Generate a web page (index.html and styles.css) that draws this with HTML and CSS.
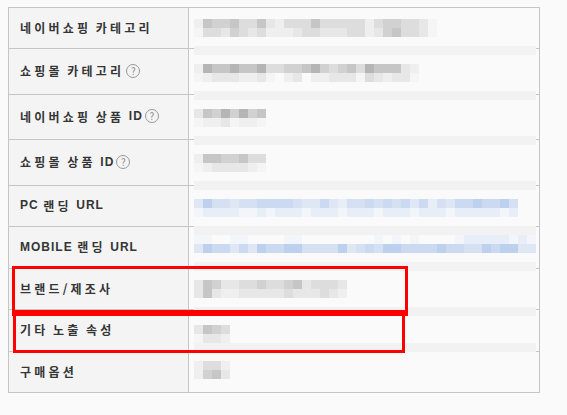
FILE: index.html
```html
<!DOCTYPE html>
<html lang="ko">
<head>
  <meta charset="UTF-8">
  <title>상품 정보</title>
  <link rel="stylesheet" href="styles.css">
</head>
<body>
  <div class="sheet">
    <div class="info-table">
      <div class="row">
        <div class="label">네이버쇼핑 카테고리</div>
        <div class="value"></div>
      </div>
      <div class="row row-q">
        <div class="label">쇼핑몰 카테고리<span class="help">?</span></div>
        <div class="value"></div>
      </div>
      <div class="row row-q row-short">
        <div class="label">네이버쇼핑 상품 <span class="en">ID</span><span class="help">?</span></div>
        <div class="value"></div>
      </div>
      <div class="row row-q">
        <div class="label">쇼핑몰 상품 <span class="en">ID</span><span class="help">?</span></div>
        <div class="value"></div>
      </div>
      <div class="row">
        <div class="label"><span class="en">PC</span> 랜딩 <span class="en">URL</span></div>
        <div class="value"></div>
      </div>
      <div class="row row-odd">
        <div class="label"><span class="en">MOBILE</span> 랜딩 <span class="en">URL</span></div>
        <div class="value"></div>
      </div>
      <div class="row">
        <div class="label">브랜드/제조사</div>
        <div class="value"></div>
      </div>
      <div class="row row-odd">
        <div class="label">기타 노출 속성</div>
        <div class="value"></div>
      </div>
      <div class="row">
        <div class="label">구매옵션</div>
        <div class="value"></div>
      </div>
    </div>

    <!-- values are pixelated in the capture -->
    <div class="mosaic">
      <div class="mz"><i class="l1"></i><i class="l5"></i><i class="l4"></i><i class="l4"></i><i class="l5"></i><i class="l3"></i><i class="l3"></i><i class="l5"></i><i class="l2"></i><i class="l1"></i><i class="l3"></i><i class="l3"></i><i class="l3"></i><i class="l5"></i><i class="l3"></i><i class="l3"></i><i class="l3"></i><i class="l3"></i><i class="l3"></i><i class="l1"></i><i class="l3"></i><i class="l4"></i><i class="l4"></i><i class="l3"></i><i class="l3"></i><i class="l2"></i><i class="l0"></i></div>
      <div class="mz"><i class="l0"></i><i class="l3"></i><i class="l3"></i><i class="l2"></i><i class="l4"></i><i class="l3"></i><i class="l2"></i><i class="l3"></i><i class="l1"></i><i class="l1"></i><i class="l1"></i><i class="l2"></i><i class="l3"></i><i class="l3"></i><i class="l2"></i><i class="l2"></i><i class="l2"></i><i class="l3"></i><i class="l3"></i><i class="l1"></i><i class="l2"></i><i class="l4"></i><i class="l5"></i><i class="l3"></i><i class="l3"></i><i class="l2"></i><i class="l0"></i></div>
      <div class="mz"></div>
      <div class="mz band"></div>
      <div class="mz"></div>
      <div class="mz"><i class="l1"></i><i class="l6"></i><i class="l5"></i><i class="l5"></i><i class="l6"></i><i class="l5"></i><i class="l5"></i><i class="l6"></i><i class="l3"></i><i class="l3"></i><i class="l4"></i><i class="l4"></i><i class="l5"></i><i class="l6"></i><i class="l4"></i><i class="l3"></i><i class="l4"></i><i class="l5"></i><i class="l3"></i><i class="l6"></i><i class="l5"></i><i class="l5"></i><i class="l5"></i><i class="l2"></i><i class="l1"></i></div>
      <div class="mz"><i class="l0"></i><i class="l1"></i><i class="l2"></i><i class="l2"></i><i class="l2"></i><i class="l1"></i><i class="l1"></i><i class="l2"></i><i class="l0"></i><i></i><i class="l1"></i><i class="l2"></i><i></i><i class="l1"></i><i class="l1"></i><i class="l2"></i><i class="l2"></i><i class="l2"></i><i class="l0"></i><i class="l3"></i><i class="l2"></i><i class="l1"></i><i class="l2"></i><i class="l2"></i><i class="l0"></i></div>
      <div class="mz"></div>
      <div class="mz band"></div>
      <div class="mz"></div>
      <div class="mz"><i class="l2"></i><i class="l5"></i><i class="l4"></i><i class="l6"></i><i class="l4"></i><i class="l6"></i><i class="l4"></i><i class="l5"></i></div>
      <div class="mz"><i class="l0"></i><i class="l1"></i><i class="l1"></i><i class="l2"></i><i class="l0"></i><i class="l1"></i><i class="l1"></i><i class="l0"></i></div>
      <div class="mz"></div>
      <div class="mz band"></div>
      <div class="mz"></div>
      <div class="mz"><i class="l1"></i><i class="l5"></i><i class="l5"></i><i class="l4"></i><i class="l4"></i><i class="l5"></i><i class="l3"></i><i class="l3"></i></div>
      <div class="mz"><i class="l0"></i><i class="l1"></i><i class="l2"></i><i class="l2"></i><i class="l2"></i><i class="l2"></i><i class="l1"></i><i class="l0"></i></div>
      <div class="mz"></div>
      <div class="mz band"></div>
      <div class="mz"></div>
      <div class="mz"><i class="b2"></i><i class="b5"></i><i class="b3"></i><i class="b3"></i><i class="b2"></i><i class="b3"></i><i class="b3"></i><i class="b4"></i><i class="b4"></i><i class="b4"></i><i class="b4"></i><i class="b3"></i><i class="b2"></i><i class="b2"></i><i class="b4"></i><i class="b2"></i><i class="b1"></i><i class="b3"></i><i class="b3"></i><i class="b4"></i><i class="b3"></i><i class="b4"></i><i class="b3"></i><i class="b4"></i><i class="b2"></i><i class="b4"></i><i class="b1"></i><i class="b3"></i><i class="b2"></i><i class="b4"></i><i class="b4"></i><i class="b5"></i><i class="b4"></i><i class="b4"></i><i class="b5"></i><i class="b3"></i></div>
      <div class="mz"><i class="b0"></i><i class="b1"></i><i class="b1"></i><i class="b1"></i><i class="b1"></i><i class="b0"></i><i class="b0"></i><i class="b1"></i><i class="b0"></i><i class="b1"></i><i class="b1"></i><i class="b1"></i><i class="b0"></i><i class="b1"></i><i class="b1"></i><i class="b1"></i><i class="b0"></i><i class="b1"></i><i class="b1"></i><i class="b1"></i><i class="b0"></i><i class="b1"></i><i class="b1"></i><i class="b1"></i><i class="b0"></i><i class="b1"></i><i class="b1"></i><i class="b1"></i><i class="b0"></i><i class="b1"></i><i class="b1"></i><i class="b1"></i><i class="b1"></i><i class="b1"></i><i class="b0"></i><i class="b1"></i></div>
      <div class="mz"></div>
      <div class="mz band"></div>
      <div class="mz"><i class="b0"></i><i class="b0"></i><i></i><i></i><i class="b0"></i><i class="b0"></i><i></i><i></i><i></i><i></i><i class="b0"></i><i class="b0"></i><i></i><i></i><i></i><i></i><i></i><i></i><i></i><i></i><i class="b0"></i><i></i><i class="b0"></i><i></i><i class="b0"></i><i></i><i></i><i></i><i></i><i class="b0"></i><i class="b1"></i><i class="b1"></i><i class="b1"></i><i class="b1"></i><i class="b1"></i><i class="b0"></i><i class="b1"></i><i class="b0"></i></div>
      <div class="mz"><i class="b2"></i><i class="b5"></i><i class="b4"></i><i class="b4"></i><i class="b2"></i><i class="b4"></i><i class="b2"></i><i class="b5"></i><i class="b4"></i><i class="b4"></i><i class="b5"></i><i class="b5"></i><i class="b3"></i><i class="b3"></i><i class="b3"></i><i class="b3"></i><i class="b5"></i><i class="b2"></i><i class="b3"></i><i class="b4"></i><i class="b3"></i><i class="b5"></i><i class="b5"></i><i class="b4"></i><i class="b4"></i><i class="b4"></i><i class="b4"></i><i class="b5"></i><i class="b4"></i><i class="b4"></i><i class="b3"></i><i class="b3"></i><i class="b5"></i><i class="b4"></i><i class="b5"></i><i class="b5"></i><i class="b2"></i><i class="b2"></i></div>
      <div class="mz"></div>
      <div class="mz band"></div>
      <div class="mz"></div>
      <div class="mz"><i class="l2"></i><i class="l5"></i><i class="l4"></i><i class="l2"></i><i class="l2"></i><i class="l3"></i><i class="l3"></i><i class="l4"></i><i class="l3"></i><i class="l3"></i><i class="l4"></i><i class="l5"></i><i class="l2"></i><i class="l3"></i><i class="l3"></i><i class="l3"></i><i class="l2"></i></div>
      <div class="mz"><i class="l2"></i><i class="l5"></i><i class="l2"></i><i class="l1"></i><i class="l1"></i><i class="l2"></i><i class="l2"></i><i class="l2"></i><i class="l2"></i><i class="l2"></i><i class="l3"></i><i class="l2"></i><i class="l2"></i><i class="l2"></i><i class="l3"></i><i class="l2"></i><i class="l1"></i></div>
      <div class="mz"></div>
      <div class="mz band"></div>
      <div class="mz"></div>
      <div class="mz"><i class="l2"></i><i class="l5"></i><i class="l4"></i><i class="l3"></i></div>
      <div class="mz"><i class="l0"></i><i class="l2"></i><i class="l2"></i><i class="l1"></i></div>
      <div class="mz band"></div>
      <div class="mz"></div>
      <div class="mz"><i class="l1"></i><i class="l3"></i><i class="l3"></i><i class="l1"></i></div>
      <div class="mz"><i class="l1"></i><i class="l4"></i><i class="l5"></i><i class="l2"></i></div>
    </div>

    <!-- annotation boxes -->
    <div class="mark mark-brand"></div>
    <div class="mark mark-extra"></div>
  </div>
</body>
</html>
```

FILE: styles.css
```css
html {
  background: #fafafa;
}

body {
  margin: 7px 8px;
  font-family: "Noto Sans CJK KR", "Noto Sans", sans-serif;
  font-size: 12px;
  color: #353535;
}

.sheet {
  position: relative;
  width: 532px;
}

.info-table {
  border: 1px solid #c5c5c5;
  background: #fafafa;
}

.row {
  display: flex;
  height: 40px;
}

.row + .row {
  border-top: 1px solid #c5c5c5;
}

.row-odd {
  height: 41px;
}

.row-q {
  height: 45px;
}

.row-q.row-short {
  height: 44px;
}

.label {
  width: 168px;
  padding-left: 11px;
  padding-bottom: 2px;
  display: flex;
  align-items: center;
  white-space: pre;
  background: #f4f4f4;
  border-right: 1px solid #c5c5c5;
  font-weight: bold;
  letter-spacing: 3.2px;
  word-spacing: -2px;
}

.label .en {
  font-family: "Liberation Sans", Arial, sans-serif;
  letter-spacing: 1px;
}

.value {
  flex: 1;
}

.help {
  display: inline-flex;
  justify-content: center;
  align-items: center;
  width: 12px;
  height: 12px;
  margin-left: 2px;
  border: 1px solid #999;
  border-radius: 50%;
  font-size: 10px;
  font-weight: normal;
  letter-spacing: 0;
  color: #888;
  line-height: 1;
}

/* pixelated value column */
.mosaic {
  position: absolute;
  left: 186px;
  top: 12px;
  width: 342px;
}

.mz {
  display: flex;
  height: 9px;
}

.mz i {
  width: 9px;
  height: 9px;
}

.band {
  background: #f2f2f2;
}

.l0 { background: #f5f5f5; }
.l1 { background: #efefef; }
.l2 { background: #e7e7e7; }
.l3 { background: #dddddd; }
.l4 { background: #d1d1d1; }
.l5 { background: #c6c6c6; }
.l6 { background: #b5b5b5; }

.b0 { background: #f2f5f9; }
.b1 { background: #e8eef7; }
.b2 { background: #dfe7f4; }
.b3 { background: #d5e0f2; }
.b4 { background: #cbdaf0; }
.b5 { background: #bdd1ee; }

.mark {
  position: absolute;
  border: 3px solid #ff0000;
}

.mark-brand {
  left: 4px;
  top: 259px;
  width: 390px;
  height: 44px;
}

.mark-extra {
  left: 5px;
  top: 303px;
  width: 386px;
  height: 37px;
}
```
